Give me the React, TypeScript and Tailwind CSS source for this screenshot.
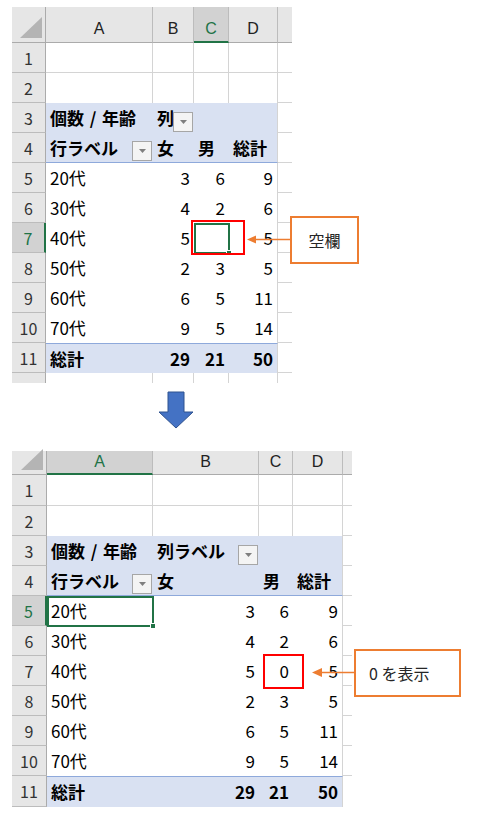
import React from "react";

const JP = "font-['Noto_Sans_CJK_JP','Noto_Sans',sans-serif]";
const LETTER = "font-['Liberation_Sans','Noto_Sans',sans-serif]";

function Dropdown() {
  return (
    <div className="absolute right-[1px] bottom-[1px] w-[20px] h-[20px] bg-[#f4f4f4] border border-[#a6a6a6] flex items-center justify-center">
      <svg width="7" height="4" viewBox="0 0 7 4">
        <path d="M0 0H7L3.5 4Z" fill="#7f7f7f" />
      </svg>
    </div>
  );
}

function Corner() {
  return (
    <div className="flex items-end justify-end pr-[3px] pb-[4px] bg-[#e6e6e6] border-r border-b border-[#ababab]">
      <svg width="22" height="21" viewBox="0 0 22 21">
        <path d="M22 0V21H0Z" fill="#b4b4b4" />
      </svg>
    </div>
  );
}

function ColHdr({ label, sel, last, top }: { label?: string; sel?: boolean; last?: boolean; top?: boolean }) {
  const base = `flex items-center justify-center ${LETTER} text-[16px] ${top ? "pt-[9px]" : "pb-[1px]"}`;
  if (sel)
    return (
      <div className={`${base} bg-[#d2d2d2] text-[#217346] border-r border-r-[#bcbcbc] border-b-2 border-b-[#217346]`}>{label}</div>
    );
  if (last) return <div className={`${base} bg-[#e6e6e6] border-b border-b-[#ababab]`} />;
  return (
    <div className={`${base} bg-[#e6e6e6] text-[#222] border-r border-r-[#bcbcbc] border-b border-b-[#ababab]`}>{label}</div>
  );
}

function RowHdr({ n, sel, partial }: { n: number; sel?: boolean; partial?: boolean }) {
  if (sel)
    return (
      <div className="flex items-center justify-center text-[16px] bg-[#d2d2d2] text-[#217346] border-b border-b-[#bcbcbc] border-r-2 border-r-[#217346]">
        {n}
      </div>
    );
  if (partial)
    return (
      <div className="overflow-hidden text-[16px] bg-[#e6e6e6] text-[#333] border-r border-r-[#ababab]">
        <div className="h-[30px] flex items-center justify-center">{n}</div>
      </div>
    );
  return (
    <div className="flex items-center justify-center text-[16px] bg-[#e6e6e6] text-[#333] border-b border-b-[#bcbcbc] border-r border-r-[#ababab]">
      {n}
    </div>
  );
}

function C({ children, cls = "" }: { children?: React.ReactNode; cls?: string }) {
  return <div className={`relative flex items-center overflow-hidden whitespace-nowrap text-[17px] ${cls}`}>{children}</div>;
}

const G = "border-r border-b border-[#d4d4d4]";
const GR = "border-r border-[#d4d4d4]";
const GB = "border-b border-[#d4d4d4]";
const BL = "bg-[#d9e1f2]";
const BLB = "bg-[#d9e1f2] border-b border-b-[#8ea9db]";
const BLBR = "bg-[#d9e1f2] border-b border-b-[#8ea9db] border-r border-r-[#d4d4d4]";
const BLR = "bg-[#d9e1f2] border-r border-r-[#d4d4d4]";
const BLT = "bg-[#d9e1f2] border-t border-t-[#8ea9db]";
const BLTR = "bg-[#d9e1f2] border-t border-t-[#8ea9db] border-r border-r-[#d4d4d4]";
const L = "pl-[4px]";
const R = "justify-end pr-[4px]";
const TITLE = "個数\u2004/\u2004年齢";

const data1 = [
  ["20代", "3", "6", "9"],
  ["30代", "4", "2", "6"],
  ["40代", "5", "", "5"],
  ["50代", "2", "3", "5"],
  ["60代", "6", "5", "11"],
  ["70代", "9", "5", "14"],
];
const data2 = [
  ["20代", "3", "6", "9"],
  ["30代", "4", "2", "6"],
  ["40代", "5", "0", "5"],
  ["50代", "2", "3", "5"],
  ["60代", "6", "5", "11"],
  ["70代", "9", "5", "14"],
];

function Sheet1() {
  return (
    <div
      className={`grid grid-cols-[34px_107px_41px_35px_49px_14px] grid-rows-[36px_repeat(11,30px)_10px] w-[280px] ${JP} text-black`}
    >
      <Corner />
      <ColHdr label="A" top />
      <ColHdr label="B" top />
      <ColHdr label="C" sel top />
      <ColHdr label="D" top />
      <ColHdr last top />

      {[1, 2].map((n) => (
        <React.Fragment key={n}>
          <RowHdr n={n} />
          <C cls={n === 1 ? G : GR} />
          <C cls={n === 1 ? G : GR} />
          <C cls={n === 1 ? G : GR} />
          <C cls={n === 1 ? G : GR} />
          <C cls={GB} />
        </React.Fragment>
      ))}

      <RowHdr n={3} />
      <C cls={`${BL} ${L} font-bold`}>{TITLE}</C>
      <C cls={`${BL} ${L} font-bold`}>
        列
        <Dropdown />
      </C>
      <C cls={BL} />
      <C cls={BLR} />
      <C cls={GB} />

      <RowHdr n={4} />
      <C cls={`${BLB} ${L} font-bold`}>
        行ラベル
        <Dropdown />
      </C>
      <C cls={`${BLB} ${L} font-bold`}>女</C>
      <C cls={`${BLB} ${L} font-bold`}>男</C>
      <C cls={`${BLBR} ${L} font-bold`}>総計</C>
      <C cls={GB} />

      {data1.map((r, i) => (
        <React.Fragment key={i}>
          <RowHdr n={i + 5} sel={i + 5 === 7} />
          <C cls={`bg-white ${L}`}>{r[0]}</C>
          <C cls={`bg-white ${R}`}>{r[1]}</C>
          <C cls={`bg-white ${R}`}>{r[2]}</C>
          <C cls={`bg-white ${R} ${GR}`}>{r[3]}</C>
          <C cls={GB} />
        </React.Fragment>
      ))}

      <RowHdr n={11} />
      <C cls={`${BLT} ${L} font-bold`}>総計</C>
      <C cls={`${BLT} ${R} font-bold`}>29</C>
      <C cls={`${BLT} ${R} font-bold`}>21</C>
      <C cls={`${BLTR} ${R} font-bold`}>50</C>
      <C cls={GB} />

      <RowHdr n={12} partial />
      <C cls={GR} />
      <C cls={GR} />
      <C cls={GR} />
      <C cls={GR} />
      <C />
    </div>
  );
}

function Sheet2() {
  return (
    <div
      className={`grid grid-cols-[35px_106px_106px_34px_50px_9px] grid-rows-[24px_31px_repeat(9,30px)_31px] w-[340px] ${JP} text-black`}
    >
      <Corner />
      <ColHdr label="A" sel />
      <ColHdr label="B" />
      <ColHdr label="C" />
      <ColHdr label="D" />
      <ColHdr last />

      {[1, 2].map((n) => (
        <React.Fragment key={n}>
          <RowHdr n={n} />
          <C cls={n === 1 ? G : GR} />
          <C cls={n === 1 ? G : GR} />
          <C cls={n === 1 ? G : GR} />
          <C cls={n === 1 ? G : GR} />
          <C cls={GB} />
        </React.Fragment>
      ))}

      <RowHdr n={3} />
      <C cls={`${BL} ${L} font-bold`}>{TITLE}</C>
      <C cls={`${BL} ${L} font-bold`}>
        列ラベル
        <Dropdown />
      </C>
      <C cls={BL} />
      <C cls={BLR} />
      <C cls={GB} />

      <RowHdr n={4} />
      <C cls={`${BLB} ${L} font-bold`}>
        行ラベル
        <Dropdown />
      </C>
      <C cls={`${BLB} ${L} font-bold`}>女</C>
      <C cls={`${BLB} ${L} font-bold`}>男</C>
      <C cls={`${BLBR} ${L} font-bold`}>総計</C>
      <C cls={GB} />

      {data2.map((r, i) => (
        <React.Fragment key={i}>
          <RowHdr n={i + 5} sel={i + 5 === 5} />
          <C cls={`bg-white ${L}`}>{r[0]}</C>
          <C cls={`bg-white ${R}`}>{r[1]}</C>
          <C cls={`bg-white ${R}`}>{r[2]}</C>
          <C cls={`bg-white ${R} ${GR}`}>{r[3]}</C>
          <C cls={GB} />
        </React.Fragment>
      ))}

      <RowHdr n={11} />
      <C cls={`${BLT} ${L} font-bold`}>総計</C>
      <C cls={`${BLT} ${R} font-bold`}>29</C>
      <C cls={`${BLT} ${R} font-bold`}>21</C>
      <C cls={`${BLTR} ${R} font-bold`}>50</C>
      <C />
    </div>
  );
}

export default function App() {
  return (
    <div className={`relative w-[483px] h-[826px] bg-white overflow-hidden ${JP}`}>
      <div className="pt-[7px] pl-[12px]">
        <Sheet1 />
      </div>
      <div className="pl-[158px] pt-[8px]">
        <svg width="36" height="38" viewBox="0 0 36 38">
          <polygon points="10,1 26,1 26,21 35,21 18,37 1,21 10,21" fill="#4472c4" stroke="#2f528f" strokeWidth="1" />
        </svg>
      </div>
      <div className="pl-[12px] pt-[22px]">
        <Sheet2 />
      </div>

      {/* top annotations */}
      <div className="absolute left-[194px] top-[223px] w-[36px] h-[31px] border-2 border-[#217346]" />
      <div className="absolute left-[226px] top-[250px] w-[6px] h-[6px] bg-[#217346] border border-white" />
      <div className="absolute left-[191px] top-[220px] w-[54px] h-[35px] border-2 border-[#ff0000]" />
      <svg className="absolute left-[246px] top-[233px]" width="45" height="13" viewBox="0 0 45 13">
        <line x1="9" y1="6.5" x2="45" y2="6.5" stroke="#ed7d31" strokeWidth="1.5" />
        <polygon points="1,6.5 10,2.5 10,10.5" fill="#ed7d31" />
      </svg>
      <div className="absolute left-[290px] top-[216px] w-[69px] h-[48px] border-2 border-[#ed7d31] bg-white flex items-center justify-center text-[16px] text-[#262626]">
        空欄
      </div>

      {/* bottom annotations */}
      <div className="absolute left-[47px] top-[596px] w-[107px] h-[31px] border-2 border-[#217346]" />
      <div className="absolute left-[150px] top-[623px] w-[6px] h-[6px] bg-[#217346] border border-white" />
      <div className="absolute left-[263px] top-[654px] w-[41px] h-[35px] border-2 border-[#ff0000]" />
      <svg className="absolute left-[311px] top-[666px]" width="44" height="13" viewBox="0 0 44 13">
        <line x1="10" y1="6.5" x2="44" y2="6.5" stroke="#ed7d31" strokeWidth="1.5" />
        <polygon points="1,6.5 11,2 11,11" fill="#ed7d31" />
      </svg>
      <div className="absolute left-[354px] top-[649px] w-[107px] h-[48px] border-2 border-[#ed7d31] bg-white flex items-center pl-[13px] text-[16px] text-[#262626]">
        0 を表示
      </div>
    </div>
  );
}
